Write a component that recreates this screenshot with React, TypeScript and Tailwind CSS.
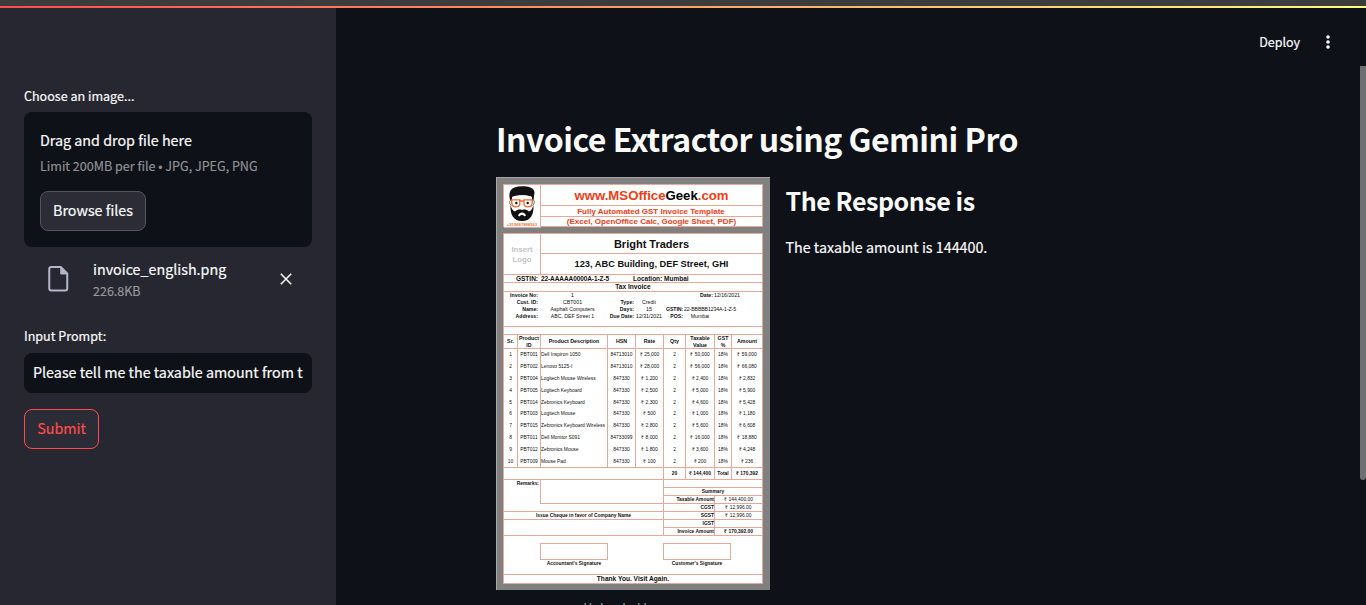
import React from "react";

const SANS = "font-['Noto_Sans_CJK_JP','Noto_Sans_CJK_SC',sans-serif]";

type Item = [string, string, string, string, string, string, string, string, string];

const ITEMS: Item[] = [
  ["1", "PBT001", "Dell Inspiron 1050", "84713010", "₹ 25,000", "2", "₹ 50,000", "18%", "₹ 59,000"],
  ["2", "PBT002", "Lenovo 5125-I", "84713010", "₹ 28,000", "2", "₹ 56,000", "18%", "₹ 66,080"],
  ["3", "PBT004", "Logitech Mouse Wireless", "847330", "₹ 1,200", "2", "₹ 2,400", "18%", "₹ 2,832"],
  ["4", "PBT005", "Logitech Keyboard", "847330", "₹ 2,500", "2", "₹ 5,000", "18%", "₹ 5,900"],
  ["5", "PBT014", "Zebronics Keyboard", "847330", "₹ 2,300", "2", "₹ 4,600", "18%", "₹ 5,428"],
  ["6", "PBT003", "Logitech Mouse", "847330", "₹ 500", "2", "₹ 1,000", "18%", "₹ 1,180"],
  ["7", "PBT015", "Zebronics Keyboard Wireless", "847330", "₹ 2,800", "2", "₹ 5,600", "18%", "₹ 6,608"],
  ["8", "PBT011", "Dell Monitor S091", "84733099", "₹ 8,000", "2", "₹ 16,000", "18%", "₹ 18,880"],
  ["9", "PBT012", "Zebronics Mouse", "847330", "₹ 1,800", "2", "₹ 3,600", "18%", "₹ 4,248"],
  ["10", "PBT009", "Mouse Pad", "847330", "₹ 100", "2", "₹ 200", "18%", "₹ 236"],
];

const SUMMARY: [string, string][] = [
  ["Taxable Amount", "₹ 144,400.00"],
  ["CGST", "₹ 12,996.00"],
  ["SGST", "₹ 12,996.00"],
  ["IGST", ""],
  ["Invoice Amount", "₹ 170,392.00"],
];

const COLS = "grid grid-cols-[14px_23px_67px_28px_28px_22px_29px_17px_31px]";
const LINE = "border-[#e6a898]";

function Avatar() {
  return (
    <svg className="h-[42px] w-[36px]" viewBox="0 0 36 42">
      <path d="M6 15C4 6 7 1.200 18 1.200c7 0 12.500 1.800 12.500 6.300 0 2-.6 3-.6 5l-1 6.500-1.400-7c-4-2-14-2-18.500 0L7.500 19z" fill="#111" />
      <path d="M8 12c3-2.500 17.500-2.500 20 0v11c0 6-4.500 9-10 9S8 29 8 23z" fill="#fff" />
      <path d="M7 15c-2 0-1.600 5 .6 5.500M29 15c2 0 1.600 5-.6 5.500" fill="#fff" stroke="#333" strokeWidth=".7" />
      <path d="M6.500 20c1 3.500 2.500 6 4.500 6.500 2-1.700 4.200-2.300 7-1.600 2.800-.7 5-.1 7 1.600 2-.5 3.500-3 4.500-6.500.4 10-3 16-11.500 16S6.100 30 6.500 20z" fill="#111" />
      <path d="M14 30.500c1.500-4 6.500-4 8 0l-1.500 1c-1-2-4-2-5 0z" fill="#fff" />
      <path d="M7.500 14.800h8.300v4c0 4-7.300 4-7.800 0zm12.500 0h8.500l-.5 4c-.5 4-8 4-8 0zM15.800 16H20" fill="#fff" stroke="#f26a2e" strokeWidth="1.300" />
      <circle cx="12.300" cy="18" r="1.200" fill="#111" />
      <circle cx="23.700" cy="18" r="1.200" fill="#111" />
    </svg>
  );
}

function Detail({ label, value, cls }: { label: string; value: string; cls: string }) {
  return (
    <div className={"grid h-[7px] items-center " + cls}>
      <b className="text-right">{label}</b>
      <span className="flex justify-center">{value}</span>
    </div>
  );
}

function Invoice() {
  return (
    <div className="h-[413px] w-[274px] shrink-0 overflow-hidden whitespace-nowrap border-l border-t border-[#a8a8a8] bg-[#808080] pl-[6px] pt-[6px] font-['Liberation_Sans',sans-serif] text-[5px] leading-none text-[#111]">
      <div className={"grid h-[43px] w-[260px] grid-cols-[37px_222px] border-l border-t bg-white " + LINE}>
        <div className={"relative border-b border-r " + LINE}>
          <Avatar />
          <span className="absolute inset-x-0 bottom-0 text-center text-[4.200px] font-bold text-[#e8763f]">+919687888563</span>
        </div>
        <div className="font-bold text-[#f23c13]">
          <div className={"flex h-[21px] items-center justify-center border-b border-r pt-[2px] text-[13.200px] " + LINE}>
            www.MSOffice<span className="text-black">Geek</span>.com
          </div>
          <div className={"flex h-[11px] items-center justify-center border-b border-r pr-px pt-px text-[8px] " + LINE}>Fully Automated GST Invoice Template</div>
          <div className={"flex h-[10px] items-center justify-center border-b border-r text-[8px] " + LINE}>(Excel, OpenOffice Calc, Google Sheet, PDF)</div>
        </div>
      </div>

      <div className={"mt-[6px] w-[260px] border-l border-t bg-white " + LINE}>
        <div className="grid h-[41px] grid-cols-[37px_222px] font-bold">
          <div className={"flex flex-col items-center justify-center border-b border-r pt-px text-[7.800px] leading-[10px] text-[#c3c3c3] " + LINE}>
            <span>Insert</span>
            <span>Logo</span>
          </div>
          <div>
            <div className={"flex h-[20px] items-center justify-center border-b border-r pt-px text-[11px] " + LINE}>Bright Traders</div>
            <div className={"flex h-[21px] items-center justify-center border-b border-r pt-[2px] text-[9.250px] " + LINE}>123, ABC Building, DEF Street, GHI</div>
          </div>
        </div>
        <div className={"grid h-[8px] grid-cols-[34px_1fr] items-center border-b border-r pt-px text-[6.500px] font-bold " + LINE}>
          <span className="text-right">GSTIN:</span>
          <span className="grid grid-cols-[92px_1fr] pl-[3px]">
            <span className="tracking-[-0.09px]">22-AAAAA0000A-1-Z-5</span>
            <span>Location: Mumbai</span>
          </span>
        </div>
        <div className={"flex h-[9px] items-center justify-center border-b border-r pt-px text-[6.600px] font-bold " + LINE}>Tax Invoice</div>
        <div className={"grid h-[35px] grid-cols-[103px_56px_99px] border-b border-r text-[5.200px] " + LINE}>
          <div>
            <Detail label="Invoice No:" value="1" cls="grid-cols-[34px_1fr]" />
            <Detail label="Cust. ID:" value="CBT001" cls="grid-cols-[34px_1fr]" />
            <Detail label="Name:" value="Asphalt Computers" cls="grid-cols-[34px_1fr]" />
            <Detail label="Address:" value="ABC, DEF Street 1" cls="grid-cols-[34px_1fr]" />
          </div>
          <div className="pt-[7px]">
            <Detail label="Type:" value="Credit" cls="grid-cols-[27px_30px]" />
            <Detail label="Days:" value="15" cls="grid-cols-[27px_30px]" />
            <Detail label="Due Date:" value="12/31/2021" cls="grid-cols-[27px_30px]" />
          </div>
          <div>
            <Detail label="Date:" value="12/16/2021" cls="grid-cols-[50px_28px]" />
            <div className="h-[7px]" />
            <Detail label="GSTIN:" value="22-BBBBB1234A-1-Z-5" cls="grid-cols-[20px_54px] tracking-[-0.1px]" />
            <Detail label="POS:" value="Mumbai" cls="grid-cols-[20px_34px]" />
          </div>
        </div>
        <div className={"h-[8px] border-b border-r " + LINE} />
        <div className={"h-[14px] text-[5.300px] font-bold leading-[6.500px] " + COLS}>
          {["Sr.", "Product\nID", "Product Description", "HSN", "Rate", "Qty", "Taxable\nValue", "GST\n%", "Amount"].map((h) => (
            <div key={h} className={"flex items-center justify-center whitespace-pre border-b border-r text-center " + LINE}>{h}</div>
          ))}
        </div>
        <div className={"h-[119px] text-[4.900px] grid-rows-[repeat(10,11.9px)] " + COLS}>
          {ITEMS.map((row, r) =>
            row.map((cell, c) => (
              <div
                key={r + "-" + c}
                className={"flex items-center border-r pt-px " + LINE + (c === 2 ? " justify-start" : " justify-center") + (r === 9 ? " border-b" : "")}
              >
                {cell}
              </div>
            )),
          )}
        </div>
        <div className="grid h-[12px] grid-cols-[160px_22px_29px_17px_31px] text-[4.900px] font-bold">
          {["", "20", "₹ 144,400", "Total", "₹ 170,392"].map((t, i) => (
            <div key={i} className={"flex items-center justify-center border-b border-r pt-[2px] " + LINE}>{t}</div>
          ))}
        </div>
        <div className="grid h-[56px] grid-cols-[160px_99px] text-[4.900px] font-bold">
          <div className={"border-r " + LINE}>
            <div className="grid h-[24px] grid-cols-[37px_1fr]">
              <div className={"border-r pr-px pt-[2px] text-right " + LINE}>Remarks:</div>
              <div className={"border-b " + LINE} />
            </div>
            <div className={"h-[8px] border-b " + LINE} />
            <div className={"flex h-[8px] items-center justify-center border-b pt-px " + LINE}>Issue Cheque in favor of Company Name</div>
            <div className={"h-[16px] border-b " + LINE} />
          </div>
          <div>
            <div className={"h-[8px] border-b border-r " + LINE} />
            <div className={"flex h-[8px] items-center justify-center border-b border-r pt-px " + LINE}>Summary</div>
            {SUMMARY.map(([k, v], i) => (
              <div key={k} className="grid h-[8px] grid-cols-[51px_48px]">
                <div className={"flex items-center justify-end border-b border-r pt-px " + LINE}>{k}</div>
                <div className={"flex items-center justify-center border-b border-r pt-px " + LINE + (i < 4 ? " font-normal" : "")}>{v}</div>
              </div>
            ))}
          </div>
        </div>
        <div className={"flex h-[39px] justify-between border-b border-r pl-[36px] pr-[31px] pt-[7px] text-[4.900px] font-bold " + LINE}>
          {["Accountant's Signature", "Customer's Signature"].map((t) => (
            <div key={t} className="w-[68px] text-center">
              <div className={"mb-[2px] h-[17px] border " + LINE} />
              {t}
            </div>
          ))}
        </div>
        <div className={"flex h-[9px] items-center justify-center border-b border-r text-[6.600px] font-bold " + LINE}>Thank You. Visit Again.</div>
      </div>
    </div>
  );
}

function Sidebar() {
  return (
    <aside className="w-[336px] shrink-0 bg-[#262730] px-6 pt-[76px] [-webkit-text-stroke:0.2px]">
      <label className="block h-[24px] text-[12.550px] leading-[24px]">Choose an image...</label>
      <section className="mt-[4px] h-[135px] rounded-lg bg-[#0e1117] px-4 pt-[15px]">
        <div className="h-[27px] text-[14.300px] leading-[26px]">Drag and drop file here</div>
        <div className="h-[24px] text-[12.550px] leading-[24px] text-[#8f9093]">Limit 200MB per file • JPG, JPEG, PNG</div>
        <button className="mt-[13px] flex h-[40px] w-[106px] items-center justify-center rounded-lg border border-[#53545c] bg-[#2b2c36] pb-[2px] text-[14.300px]">
          Browse files
        </button>
      </section>
      <div className="mt-[11px] flex h-[42px] items-center">
        <svg className="ml-[24px] h-[26px] w-[21px]" viewBox="0 0 20.500 26" fill="none" stroke="#b3b6c9" strokeWidth="2" strokeLinejoin="round">
          <path d="M3 1h9.500L19 7.500V22.500a2 2 0 0 1-2 2H3a2 2 0 0 1-2-2V3a2 2 0 0 1 2-2z" />
          <path d="M12.500 1v7H19z" fill="#b3b6c9" strokeWidth="1" />
        </svg>
        <div className="ml-[24px] w-[187px]">
          <div className="h-[22px] text-[14.300px] leading-[22px]">invoice_english.png</div>
          <div className="h-[20px] text-[12.500px] leading-[22px] text-[#96979b]">226.8KB</div>
        </div>
        <svg className="h-[12px] w-[12px]" viewBox="0 0 12 12" stroke="#fafafa" strokeWidth="1.600">
          <path d="M.8.8l10.400 10.400M11.200.8L.8 11.200" />
        </svg>
      </div>
      <label className="mt-[24px] block h-[24px] text-[12.550px] leading-[24px]">Input Prompt:</label>
      <div className="mt-[5px] flex h-[40px] items-center overflow-hidden whitespace-nowrap rounded-lg bg-[#0e1117] pb-[2px] pl-[9px] text-[14.320px]">
        Please tell me the taxable amount from t
      </div>
      <button className="mt-[16px] flex h-[40px] w-[75px] items-center justify-center rounded-lg border border-[#ff4b4b] bg-[#2b2c36] pb-[2px] text-[14.300px] text-[#ff4b4b]">
        Submit
      </button>
    </aside>
  );
}

export default function App() {
  return (
    <div className={"flex h-[605px] w-[1366px] flex-col overflow-hidden bg-[#0e1117] text-[#fafafa] " + SANS}>
      <div className="h-[6px] shrink-0 bg-[#3c3c3c]" />
      <div className="h-[2px] shrink-0 bg-[linear-gradient(90deg,#ff4b4b,#fffd80)]" />
      <div className="flex min-h-0 flex-1">
        <Sidebar />
        <main className="flex min-w-0 flex-1 flex-col pl-[160px]">
          <header className="flex h-[58px] shrink-0 items-center justify-end pr-[35px] pt-[10px]">
            <span className="mr-[25px] text-[12.500px] [-webkit-text-stroke:0.2px]">Deploy</span>
            <svg className="h-[14px] w-[6px]" viewBox="0 0 6 14" fill="#fafafa">
              <circle cx="3" cy="2" r="1.800" />
              <circle cx="3" cy="7" r="1.800" />
              <circle cx="3" cy="12" r="1.800" />
            </svg>
          </header>
          <div className="flex min-h-0 flex-1 justify-between">
            <div className="min-w-0">
              <h1 className="mt-[46px] h-[53px] whitespace-nowrap text-[32px] font-bold leading-[52px] tracking-[-0.510px]">Invoice Extractor using Gemini Pro</h1>
              <div className="mt-[12px] flex gap-[15.5px]">
                <figure className="w-[274px]">
                  <Invoice />
                  <figcaption className="mt-[6px] text-center text-[12.500px] leading-[24px] text-[#96979b]">Uploaded Image.</figcaption>
                </figure>
                <div>
                  <h2 className="mt-[6px] h-[37px] whitespace-nowrap text-[25px] font-bold leading-[35px] tracking-[-0.440px]">The Response is</h2>
                  <p className="mt-[15px] text-[14.300px] leading-[24px] [-webkit-text-stroke:0.2px]">The taxable amount is 144400.</p>
                </div>
              </div>
            </div>
            <div className="h-[414px] w-[6px] rounded-b-[3px] bg-[#6e6f73]" />
          </div>
        </main>
      </div>
    </div>
  );
}
